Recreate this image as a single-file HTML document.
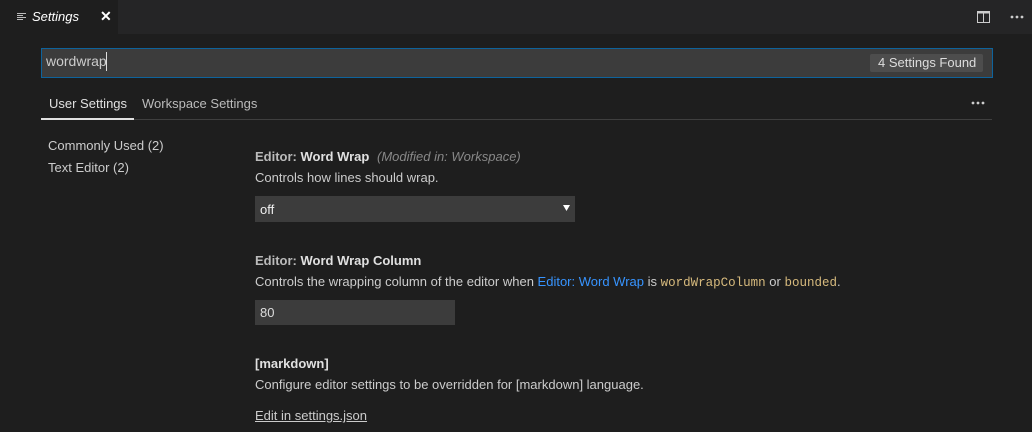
<!DOCTYPE html><html><head><style>
body{margin:0;width:1032px;height:432px;background:#1e1e1e;font-family:"Liberation Sans",sans-serif;font-size:13px;color:#ccc;position:relative;overflow:hidden}
.a{position:absolute;white-space:nowrap}
b{color:#e0e0e0}
</style></head><body>
<div class="a" style="left:0;top:0;width:1032px;height:34px;background:#252526"></div>
<div class="a" style="left:0;top:0;width:118px;height:34px;background:#1e1e1e"></div>
<svg class="a" style="left:17px;top:12px" width="10" height="10"><g stroke="#bbb" stroke-width="1"><line x1="0" y1="1.5" x2="9" y2="1.5"/><line x1="0" y1="3.5" x2="6" y2="3.5"/><line x1="0" y1="5.5" x2="9" y2="5.5"/><line x1="0" y1="7.5" x2="6" y2="7.5"/></g></svg>
<div class="a" style="left:32px;top:9px;font-style:italic;color:#fff">Settings</div>
<div class="a" style="left:100px;top:8px;color:#fff;font-weight:bold;font-size:14px">✕</div>
<svg class="a" style="left:977px;top:10px" width="14" height="14"><rect x="0.5" y="1.5" width="12" height="11" fill="none" stroke="#ccc"/><rect x="0.5" y="1.5" width="12" height="2" fill="#ccc"/><line x1="6.5" y1="2" x2="6.5" y2="12" stroke="#ccc"/></svg>
<svg class="a" style="left:1010px;top:15px" width="14" height="4"><g fill="#ccc"><circle cx="2" cy="2" r="1.4"/><circle cx="7" cy="2" r="1.4"/><circle cx="12" cy="2" r="1.4"/></g></svg>
<div class="a" style="left:41px;top:48px;width:950px;height:28px;background:#3c3c3c;border:1px solid #0e639c"></div>
<div class="a" style="left:46px;top:53px;color:#ccc;font-size:14px">wordwrap</div>
<div class="a" style="left:106px;top:52px;width:1px;height:19px;background:#ddd"></div>
<div class="a" style="left:870px;top:54px;width:113px;height:18px;background:#4d4d4d;border-radius:2px"></div>
<div class="a" style="left:878px;top:55px;color:#ddd">4 Settings Found</div>
<div class="a" style="left:41px;top:119px;width:951px;height:1px;background:#3f3f3f"></div>
<div class="a" style="left:41px;top:118px;width:93px;height:2px;background:#e0e0e0"></div>
<div class="a" style="left:49px;top:96px;color:#e0e0e0">User Settings</div>
<div class="a" style="left:142px;top:96px;color:#bbb">Workspace Settings</div>
<svg class="a" style="left:971px;top:101px" width="14" height="4"><g fill="#ccc"><circle cx="2" cy="2" r="1.4"/><circle cx="7" cy="2" r="1.4"/><circle cx="12" cy="2" r="1.4"/></g></svg>
<div class="a" style="left:48px;top:138px">Commonly Used (2)</div>
<div class="a" style="left:48px;top:160px">Text Editor (2)</div>
<div class="a" style="left:255px;top:149px"><span style="color:#bbb;font-weight:bold">Editor: </span><b>Word Wrap</b> <span style="font-style:italic;color:#888;margin-left:4px">(Modified in: Workspace)</span></div>
<div class="a" style="left:255px;top:170px">Controls how lines should wrap.</div>
<div class="a" style="left:255px;top:196px;width:320px;height:26px;background:#3c3c3c"></div>
<div class="a" style="left:260px;top:202px;color:#f0f0f0">off</div>
<svg class="a" style="left:563px;top:205px" width="7" height="6"><path d="M0 0H7L3.5 6Z" fill="#fff"/></svg>
<div class="a" style="left:255px;top:253px"><span style="color:#bbb;font-weight:bold">Editor: </span><b>Word Wrap Column</b></div>
<div class="a" style="left:255px;top:274px">Controls the wrapping column of the editor when <span style="color:#3794ff">Editor: Word Wrap</span> is <span style="font-family:'Liberation Mono',monospace;color:#d7ba7d;font-size:12.5px">wordWrapColumn</span> or <span style="font-family:'Liberation Mono',monospace;color:#d7ba7d;font-size:12.5px">bounded</span>.</div>
<div class="a" style="left:255px;top:300px;width:200px;height:25px;background:#3c3c3c"></div>
<div class="a" style="left:260px;top:305px;color:#ddd">80</div>
<div class="a" style="left:255px;top:356px"><b>[markdown]</b></div>
<div class="a" style="left:255px;top:377px">Configure editor settings to be overridden for [markdown] language.</div>
<div class="a" style="left:255px;top:408px;text-decoration:underline">Edit in settings.json</div>
</body></html>
